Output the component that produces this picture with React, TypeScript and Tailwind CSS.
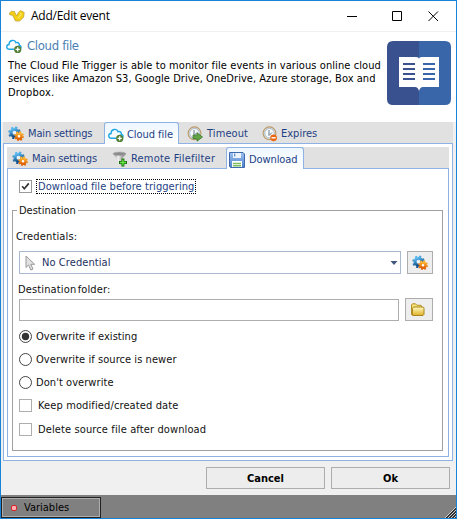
import React from "react";

type IconProps = { className?: string };

function Gears({ className = "" }: IconProps) {
  return (
    <svg className={"block shrink-0 " + className} width="16" height="16" viewBox="0 0 16 16">
      <defs>
        <linearGradient id="gb" x1="0" y1="0" x2="0.4" y2="1">
          <stop offset="0" stopColor="#5fc0f5" />
          <stop offset="1" stopColor="#14508c" />
        </linearGradient>
        <linearGradient id="go" x1="0" y1="0" x2="0" y2="1">
          <stop offset="0" stopColor="#ffb02e" />
          <stop offset="1" stopColor="#dd6204" />
        </linearGradient>
      </defs>
      <circle cx="6.5" cy="6.8" r="5.2" fill="none" stroke="url(#gb)" strokeWidth="2.2" strokeDasharray="2.1 1.98" />
      <circle cx="6.5" cy="6.8" r="3.5" fill="#e8f3fb" stroke="url(#gb)" strokeWidth="3" />
      <circle cx="11" cy="10.2" r="4" fill="none" stroke="url(#go)" strokeWidth="1.8" strokeDasharray="1.7 1.44" />
      <circle cx="11" cy="10.2" r="2.5" fill="#fff" stroke="url(#go)" strokeWidth="2.4" />
    </svg>
  );
}

function CloudAdd() {
  return (
    <svg className="block shrink-0" width="16" height="16" viewBox="0 0 16 16">
      <path d="M3.6 11.3C-.2 11.3 0 6.6 3.1 6.5C2.8 2.2 8.8.8 10 4.7C12.7 3.6 13.6 6.3 13.2 7.2C15.4 7.8 15.2 9.5 14.7 10.3M3.4 11.3H8" fill="none" stroke="#1fa6e6" strokeWidth="1.4" />
      <circle cx="11.7" cy="11.4" r="3.6" fill="#517f35" />
      <path d="M11.7 9.3V13.5M9.6 11.4H13.8" stroke="#fff" strokeWidth="1.3" />
    </svg>
  );
}

function Clock({ kind }: { kind: "go" | "stop" }) {
  return (
    <svg className="block shrink-0" width="16" height="16" viewBox="0 0 16 16">
      <circle cx="7.5" cy="7.3" r="6.4" fill="#e8edf2" stroke="#b99a68" strokeWidth="1.1" />
      <circle cx="7.5" cy="7.3" r="4.8" fill="#f8fafc" stroke="#9aabb9" strokeWidth=".9" />
      <path d="M7 4V9.5L10 6.5" fill="none" stroke="#62788d" strokeWidth="1" />
      {kind === "go" ? (
        <path d="M6 9.2H10V6.8L15.5 11L10 15.2V12.8H6Z" fill="#62a545" stroke="#377526" strokeWidth=".8" />
      ) : (
        <g>
          <circle cx="11.6" cy="11.8" r="3.4" fill="#eb6815" />
          <path d="M9.5 11.8H13.7" stroke="#fff" strokeWidth="1.4" />
        </g>
      )}
    </svg>
  );
}

function Funnel() {
  return (
    <svg className="block shrink-0" width="16" height="16" viewBox="0 0 16 16">
      <defs>
        <linearGradient id="fu">
          <stop offset="0" stopColor="#777" />
          <stop offset=".4" stopColor="#f4f4f4" />
          <stop offset="1" stopColor="#555" />
        </linearGradient>
      </defs>
      <path d="M1.2 3L6 8.5V13L9 14.5V8.5L13.8 3Z" fill="url(#fu)" />
      <ellipse cx="7.5" cy="2.8" rx="6.4" ry="1.7" fill="#8b8b8b" stroke="#aaa" strokeWidth=".7" />
      <path d="M9.4 7.5H12.4V10H15V13H12.4V15.5H9.4V13H7V10H9.4Z" fill="#186b0b" />
      <path d="M10.9 8.5V14.5M8 11.5H14" stroke="#67e647" strokeWidth="1.3" />
    </svg>
  );
}

function Floppy() {
  return (
    <svg className="block shrink-0" width="16" height="16" viewBox="0 0 16 16">
      <defs>
        <linearGradient id="fl" x1="0" y1="0" x2="0" y2="1">
          <stop offset="0" stopColor="#9fc3f0" />
          <stop offset="1" stopColor="#4b7fcb" />
        </linearGradient>
      </defs>
      <path d="M.5 .5H14L15.5 2V15.5H1.5L.5 14.5Z" fill="url(#fl)" stroke="#3f68ad" />
      <path d="M4 1H12V6H4Z" fill="#eef4fb" />
      <path d="M5 1.5V4.5H6.3V1.5Z" fill="#5d8dcb" />
      <path d="M3 9H13V15H3Z" fill="#fff" />
      <path d="M4 11.5H12M4 13.8H12" stroke="#7cbd5e" strokeWidth="1.4" />
    </svg>
  );
}

function Folder() {
  return (
    <svg className="block" width="16" height="16" viewBox="0 0 16 16">
      <defs>
        <linearGradient id="fo" x1="0" y1="0" x2="0" y2="1">
          <stop offset="0" stopColor="#fffbc0" />
          <stop offset="1" stopColor="#dfb02a" />
        </linearGradient>
      </defs>
      <path d="M1.5 12.5V3L2.5 1.8H5.5L7 3.3H11L11.7 5V12.5Z" fill="#f4e178" stroke="#ad8615" strokeWidth=".9" />
      <path d="M2.3 13.2L2.5 6.3L3.5 5H13.3L14 6V12.3L13 13.5H3Z" fill="url(#fo)" stroke="#a37b0c" strokeWidth=".9" />
    </svg>
  );
}

function Cursor() {
  return (
    <svg className="block shrink-0" width="11" height="16" viewBox="0 0 11 16">
      <path d="M1 1V12.5L3.6 10L5.8 15L8 14L5.8 9.3H9.6Z" fill="#e2e2e2" stroke="#999" />
    </svg>
  );
}

function Logo() {
  return (
    <svg className="block" width="16" height="12" viewBox="0 0 16 12">
      <path d="M.5 3L2.5 1.2L5.5 1.5L7.5 6L9.5 2.2L11.5 .6L15.2 2.5L14.6 7.3L10.5 11H6.5L3.5 5H.8Z" fill="#f5cf16" stroke="#b89a30" strokeWidth=".7" />
      <path d="M11.2 2.8L12.2 4.5L9 8" fill="none" stroke="#fff38a" strokeWidth="1" />
    </svg>
  );
}

function Book() {
  return (
    <svg className="block" width="64" height="64" viewBox="0 0 64 64">
      <path d="M6 0H32V64H6Q0 64 0 58V6Q0 0 6 0Z" fill="#39528f" />
      <path d="M32 0H58Q64 0 64 6V58Q64 64 58 64H32Z" fill="#3866a9" />
      <path d="M12 16H29Q32 16 32 18Q32 16 35 16H52V46H36Q33 46 32 50Q31 46 28 46H12Z" fill="#fff" />
      <path d="M16 23H28M16 28H28M16 33H28M16 38H28" stroke="#39528f" strokeWidth="2" />
      <path d="M36 23H48M36 28H48M36 33H48M36 38H48" stroke="#3866a9" strokeWidth="2" />
    </svg>
  );
}

function Radio({ checked, label }: { checked?: boolean; label: string }) {
  return (
    <div className="flex h-[23px] items-center">
      <svg className="mr-1 block" width="13" height="13" viewBox="0 0 13 13">
        <circle cx="6.5" cy="6.5" r="6" fill="#fff" stroke="#444" />
        {checked && <circle cx="6.5" cy="6.5" r="3.7" fill="#333" />}
      </svg>
      <span className="tracking-[0.06px]">{label}</span>
    </div>
  );
}

function Check({ checked }: { checked?: boolean }) {
  return (
    <span className={"flex size-[13px] shrink-0 items-center justify-center border bg-white " + (checked ? "border-[#999]" : "border-[#adadad]")}>
      {checked && (
        <svg width="9" height="9" viewBox="0 0 9 9">
          <path d="M1.2 4.3L3.3 6.7L7.8 1.4" fill="none" stroke="#333" strokeWidth="1.7" />
        </svg>
      )}
    </span>
  );
}

export default function App() {
  return (
    <div className="flex h-[519px] w-[457px] flex-col overflow-hidden border border-[#1883d7] bg-[#f0f0f0] font-['DejaVu_Sans_Condensed','DejaVu_Sans',sans-serif] text-[11px] leading-[13px] whitespace-pre text-[#111] [font-stretch:condensed]">
      <header className="flex h-[31px] shrink-0 items-center border-b border-[#f0f0f0] bg-white pl-2">
        <Logo />
        <span className="ml-[6px] font-['Open_Sans','Noto_Sans',sans-serif] text-[12px] leading-4 tracking-[-0.25px] text-black [font-stretch:normal]">Add/Edit event</span>
        <svg className="mr-[17px] ml-auto block" width="92" height="11" viewBox="0 0 92 11" fill="none" stroke="#000">
          <path d="M0 5.5H10M45.5 .5H54.5V9.5H45.5ZM81.5 .5L91 10M91 .5L81.5 10" />
        </svg>
      </header>

      <section className="flex h-[90px] shrink-0 justify-between bg-white pr-[5px] pl-[5px]">
        <div className="pt-[5px]">
          <div className="flex h-[18px] items-center gap-[5px] text-[13px] text-[#4a7fb5]">
            <CloudAdd />
            <span className="-mt-[2px] tracking-[-0.32px]">Cloud file</span>
          </div>
          <p className="mt-1 ml-[2px] leading-[13.4px] text-black">
            <span className="tracking-[0.085px]">The Cloud File Trigger is able to monitor file events in various online cloud</span>{"\n"}
            <span className="tracking-[0.04px]">services like Amazon S3, Google Drive, OneDrive, Azure storage, Box and</span>{"\n"}
            <span className="tracking-[0.2px]">Dropbox.</span>
          </p>
        </div>
        <div className="pt-[9px]"><Book /></div>
      </section>

      <main className="mx-[2px] flex h-[339px] w-[450px] shrink-0 flex-col">
        <nav className="flex h-[21px] shrink-0 items-center bg-[#e1e1e1] pt-[2px] text-[#1e3f83]">
          <div className="flex w-[101px] items-center gap-1 pl-[5px]"><Gears /><span className="tracking-[-0.15px]">Main settings</span></div>
          <div className="z-10 -mt-[2px] flex h-[22px] w-[75px] items-center gap-[3px] self-start rounded-t-[3px] border border-b-0 border-[#8db2e3] bg-gradient-to-b from-[#eef7ff] to-white pt-[2px] pl-[3px]"><CloudAdd /><span className="tracking-[-0.05px]">Cloud file</span></div>
          <div className="flex w-[75px] items-center gap-1 pl-[8px]"><Clock kind="go" /><span className="tracking-[0.1px]">Timeout</span></div>
          <div className="flex items-center gap-[3px] pl-[8px]"><Clock kind="stop" /><span>Expires</span></div>
        </nav>
        <div className="flex min-h-0 flex-1 flex-col border border-[#8db2e3] bg-white p-[3px]">
          <nav className="flex h-[21px] shrink-0 items-center bg-[#e1e1e1] pt-[2px] text-[#1e3f83]">
            <div className="flex w-[99px] items-center gap-1 pl-[5px]"><Gears /><span className="tracking-[-0.1px]">Main settings</span></div>
            <div className="flex w-[120px] items-center gap-[3px] pl-[6px]"><Funnel /><span className="tracking-[0.2px]">Remote Filefilter</span></div>
            <div className="z-10 -mt-[2px] flex h-[22px] w-[78px] items-center gap-1 self-start rounded-t-[3px] border border-b-0 border-[#8db2e3] bg-gradient-to-b from-[#eef7ff] to-white pt-[2px] pl-[2px]"><Floppy /><span className="tracking-[-0.1px]">Download</span></div>
          </nav>
          <section className="flex min-h-0 flex-1 flex-col border border-[#8db2e3] bg-white px-1 pt-[10px] pb-[5px]">
            <div className="flex h-[15px] items-center pl-[7px]">
              <Check checked />
              <span className="ml-1 h-[15px] w-[160px] border border-dotted border-black pl-px tracking-[0.07px] text-[#1e3f83]">Download file before triggering</span>
            </div>
            <fieldset className="mt-[10px] h-[247px] w-[431px] border border-[#a0a0a0] px-[2px]">
              <legend className="ml-[2px] px-[2px]">Destination</legend>
              <div className="mt-[13px] ml-[1px] tracking-[0.15px]">Credentials:</div>
              <div className="mt-2 ml-1 flex gap-[6px]">
                <div className="flex h-[23px] w-[382px] items-center border border-[#abb9cf] pl-[5px] text-[#1e2f5f]">
                  <Cursor />
                  <span className="ml-[6px] tracking-[0.08px]">No Credential</span>
                  <svg className="mr-[2px] ml-auto" width="8" height="4"><path d="M.5 0H7.5L4 4Z" fill="#3f587c" /></svg>
                </div>
                <button className="flex h-[23px] w-[26px] items-center justify-center border border-[#adadad] bg-[#eee]"><Gears /></button>
              </div>
              <div className="mt-[9px] ml-[3px] tracking-[0.14px]">Destination<span className="-ml-[2px]"> folder:</span></div>
              <div className="mt-[2px] ml-1 flex items-end gap-[6px]">
                <div className="h-[22px] w-[380px] border border-[#adadad]" />
                <button className="flex h-[23px] w-[28px] items-center border border-[#adadad] bg-[#eee] pl-1"><Folder /></button>
              </div>
              <div className="mt-1 ml-1">
                <Radio checked label="Overwrite if existing" />
                <Radio label="Overwrite if source is newer" />
                <Radio label="Don't overwrite" />
                <div className="flex h-[23px] items-center"><Check /><span className="ml-[6px] tracking-[0.12px]">Keep modified/created date</span></div>
                <div className="mt-px flex h-[23px] items-center"><Check /><span className="ml-[6px] tracking-[0.12px]">Delete source file after download</span></div>
              </div>
            </fieldset>
          </section>
        </div>
      </main>

      <div className="flex h-[34px] shrink-0 items-start gap-[6px] pt-[6px] pl-[205px] text-[11px] font-bold text-black">
        <button className="h-[22px] w-[119px] border border-[#adadad] bg-[#ededed]">Cancel</button>
        <button className="h-[22px] w-[119px] border border-[#adadad] bg-[#ededed]">Ok</button>
      </div>
      <footer className="flex h-[23px] shrink-0 items-end justify-between bg-[#808080]">
        <div className="h-[21px] w-[100px] border border-[#222]">
          <div className="flex h-full items-center border border-[#adadad] pl-[8px] text-black">
            <span className="size-[6px] rounded-[2px] border border-[#d8232a] bg-[#ffb2b2]" />
            <span className="ml-[7px]">Variables</span>
          </div>
        </div>
        <svg className="block" width="11" height="11" viewBox="0 0 11 11">
          <path d="M0 11L11 0V11Z" fill="#333" />
          <path d="M0 11L11 0M3 11L11 3M6 11L11 6M9 11L11 9" stroke="#ddd" strokeWidth=".9" />
        </svg>
      </footer>
    </div>
  );
}
